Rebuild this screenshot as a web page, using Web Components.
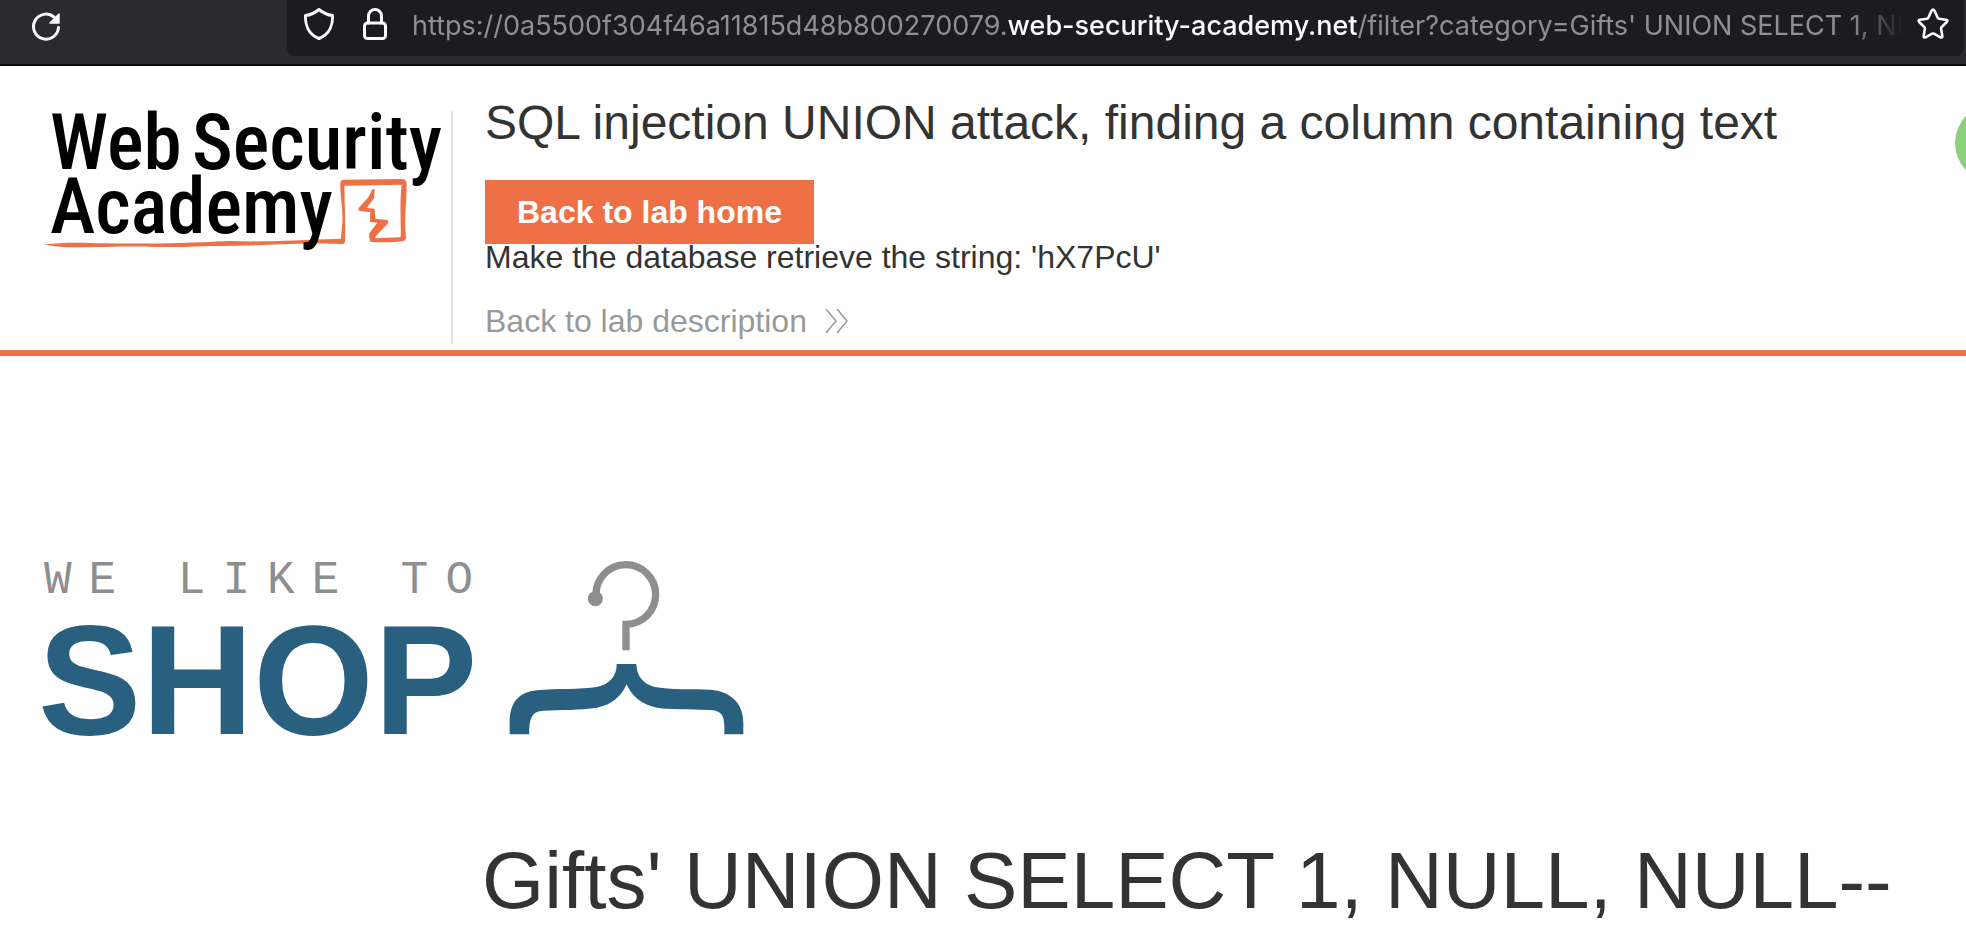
<!DOCTYPE html>
<html lang="en">
<head>
<meta charset="utf-8">
<title>SQL injection UNION attack, finding a column containing text</title>
<style>
  body { margin: 0; background: #fff; color: #333332; font-family: "Liberation Sans", Arial, sans-serif; overflow-x: hidden; }
</style>
</head>
<body>
<lab-page></lab-page>
<script>
const define = (name, html) => {
  const template = document.createElement('template');
  template.innerHTML = html;
  customElements.define(name, class extends HTMLElement {
    constructor() {
      super();
      this.attachShadow({ mode: 'open' }).append(template.content.cloneNode(true));
    }
  });
};

define('browser-bar', `
<style>
  :host { display: flex; box-sizing: border-box; height: 66px; padding: 0 2px 8px 30px; background: #2b2a33; border-bottom: 2px solid #0c0c0d; color: #fbfbfe; align-items: flex-start; justify-content: space-between; }
  button { all: unset; display: block; flex: none; height: 32px; }
  button.reload { margin-top: 10px; }
  svg { display: block; fill: none; stroke: currentColor; stroke-width: 3; stroke-linejoin: round; stroke-linecap: round; }
  .field { display: flex; box-sizing: border-box; width: calc(100% - 257px); height: 56px; padding: 8px 15px 8px 16px; background: #1c1b22; border-radius: 0 0 8px 8px; }
  .shield { margin-right: 27px; }
  .lock { margin-right: 24px; }
  .url { flex: 1; min-width: 0; height: 36px; overflow: hidden; white-space: nowrap; font: 27px/36px Inter, sans-serif; color: #8f8f94; margin-right: 12px;
    -webkit-mask-image: linear-gradient(to left, transparent, #000 56px); mask-image: linear-gradient(to left, transparent, #000 56px); }
  .url b { font-weight: 500; color: #fbfbfe; }
</style>
<button class="reload" aria-label="Reload"><svg width="32" height="32" viewBox="0 0 32 32"><path d="M28.5 17.5A12.5 12.5 0 1 1 24 7"/><path d="M29 4v9h-9z" fill="currentColor" stroke-width="1.5"/></svg></button>
<div class="field">
  <button class="shield" aria-label="Tracking protection"><svg width="32" height="32" viewBox="0 0 32 32"><path d="M16 1.5C12.500 4.500 7 7 2.500 7.500C2 16 5 26 16 30.500C27 26 30 16 29.500 7.500C25 7 19.500 4.500 16 1.500Z"/></svg></button>
  <button class="lock" aria-label="Connection secure"><svg width="26" height="32" viewBox="0 0 26 32"><rect x="2.500" y="15" width="21" height="15.500" rx="3"/><path d="M6.500 15V8a6.500 6.500 0 0 1 13 0v7"/></svg></button>
  <div class="url" role="textbox" aria-label="Address" aria-readonly="true">https://0a5500f304f46a11815d48b800270079.<b>web-security-academy.net</b>/filter?category=Gifts' UNION SELECT 1, NULL, NULL--</div>
  <button class="star" aria-label="Bookmark this page"><svg width="32" height="32" viewBox="0 0 32 32"><path d="M14.600 2.600L11.300 9.800Q10.900 10.700 10 10.800L3 11.700Q.700 12.200 2.200 14L7.400 19.200Q8 19.800 7.900 20.600L6.700 28Q6.600 30.200 8.600 29.300L15 25.700Q16 25.200 17 25.700L23.400 29.300Q25.400 30.200 25.300 28L24.100 20.600Q24 19.800 24.600 19.200L29.800 14Q31.300 12.200 29 11.700L22 10.800Q21.100 10.700 20.700 9.800L17.400 2.600Q16 .500 14.600 2.600Z" stroke-width="2.600"/></svg></button>
</div>`);

define('academy-logo', `
<style>
  :host { display: block; width: 411px; height: 140px; }
  svg { display: block; overflow: visible; }
  text { font: 500 77px "Roboto Condensed", Roboto, sans-serif; }
</style>
<svg width="411" height="140" role="img" aria-label="Web Security Academy">
  <g transform="translate(-10 -20) scale(.3333)" fill="#ee7046">
    <path fill-rule="evenodd" d="M42 463C90 457 160 457 220 460C350 462 460 460 600 453C700 457 800 450 933 446L937 400C940 360 930 320 931 280Q931 268 944 269L1117 267Q1130 268 1130 282C1131 330 1122 380 1128 444Q1127 454 1115 454C1090 458 1060 457 1025 456Q1016 454 1018 430L1042 398L1020 396L1021 366L989 364Q982 358 988 352L1015 322L1028 296L1034 298L1033 324L1010 354L1034 356L1036 386L1072 390Q1078 396 1072 402L1036 440L1036 445L1112 442C1114 400 1108 340 1115 284L943 287C944 340 947 400 945 456Q944 463 932 462L860 460C750 464 660 466 600 467C500 468 450 473 360 470C260 469 180 473 110 472Q80 471 42 463Z"/>
  </g>
  <text x="10" y="59">Web</text><text x="152" y="59">Security</text>
  <text x="10" y="123">Academy</text>
</svg>`);

define('lab-header', `
<style>
  :host { display: flex; box-sizing: border-box; min-height: 290px; padding: 28px 0 0 40px; border-bottom: 6px solid #ee7046; position: relative; overflow: hidden; }
  academy-logo { margin-top: 16px; flex: none; }
  .info { margin: 17px 0 6px; border-left: 2px solid #e5e5e5; padding-left: 32px; flex: 1; display: flex; flex-direction: column; align-items: flex-start; }
  h1 { margin: -16px 0 29px; font-weight: 400; font-size: 48px; line-height: 56px; white-space: nowrap; }
  .home { background: #ee7046; color: #fff; font-weight: 700; font-size: 32px; line-height: 64px; padding: 0 32px; text-decoration: none; }
  p { margin: 0; font-size: 32px; line-height: 26px; white-space: nowrap; }
  .back { display: flex; align-items: center; gap: 18px; margin-top: 35px; font-size: 32px; line-height: 32px; color: #999; text-decoration: none; }
  .status { position: absolute; left: calc(100% - 11px); top: 38px; width: 78px; height: 78px; border-radius: 39px; background: #8bd07c; }
</style>
<academy-logo></academy-logo>
<div class="info">
  <h1>SQL injection UNION attack, finding a column containing text</h1>
  <a class="home" href="#">Back to lab home</a>
  <p>Make the database retrieve the string: 'hX7PcU'</p>
  <a class="back" href="#">Back to lab description
    <svg width="24" height="24" viewBox="0 0 24 24" fill="none" stroke="#999" stroke-width="1.500"><path d="M1 0L11 12L1 24M12 0L22 12L12 24"/></svg></a>
</div>
<span class="status"></span>`);

define('shop-logo', `
<style>
  :host { display: flex; gap: 32px; align-items: flex-start; }
  .words { display: flex; flex-direction: column; }
  .tag { font: 46px/40px "Liberation Mono", monospace; letter-spacing: 17px; color: #8d8e90; white-space: nowrap; margin-right: -17px; }
  .name { font: 700 155px/160px "Liberation Sans", Arial, sans-serif; color: #295f7f; margin-left: -6px; }
  svg { display: block; }
</style>
<div class="words"><span class="tag">WE LIKE TO</span><span class="name">SHOP</span></div>
<svg width="236" height="174" viewBox="86 65 708 522" role="img" aria-label="Coat hanger">
  <path d="M347 178V166A89.500 89.500 0 1 1 437 255V333" fill="none" stroke="#8d8e90" stroke-width="22"/>
  <circle cx="345" cy="178" r="22.500" fill="#8d8e90"/>
  <path d="M409 374H468C469 412 490 433 520 442C570 452 640 448 690 451C750 456 789 490 789 550V585H732V560C731 525 722 513 685 512C620 509 570 511 530 505C485 497 455 472 439 435C420 475 392 497 350 505C300 513 240 511 190 514C158 516 146 530 147 585H88V550C88 490 115 458 170 453C230 447 300 451 350 443C385 436 410 412 409 374Z" fill="#295f7f"/>
</svg>`);

define('lab-page', `
<style>
  :host { display: block; }
  main { padding: 205px 0 0 44px; }
  h2 { margin: 72px 0 0 438px; font-weight: 400; font-size: 80px; line-height: 80px; padding: 8px 0; white-space: nowrap; }
</style>
<browser-bar></browser-bar>
<lab-header></lab-header>
<main>
  <shop-logo></shop-logo>
  <h2>Gifts' UNION SELECT 1, NULL, NULL--</h2>
</main>`);
</script>
</body>
</html>
